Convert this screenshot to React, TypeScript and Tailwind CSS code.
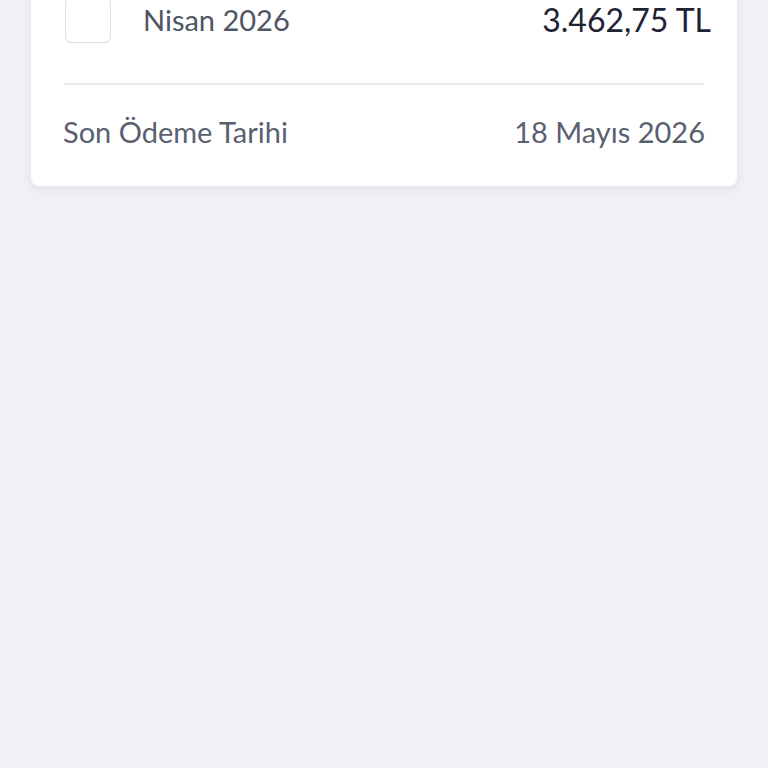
import React from 'react';

export default function App() {
  return (
    <div className="flex min-h-screen flex-col bg-[#eff1f5] px-[31px] font-['Lato',sans-serif]">
      {/* Invoice card (scrolled, top part off-screen) */}
      <div className="-mt-[40px] rounded-lg bg-white shadow-[0_2px_10px_rgba(30,40,70,0.09)]">
        <div className="flex items-center pl-[34px] pr-[26px] pt-[37px]">
          <div className="h-[46px] w-[46px] shrink-0 rounded-md border-[1.5px] border-[#dde0e7] bg-white" />
          <span className="ml-[32px] text-[29px] leading-[36px] text-[#4f5565]">Nisan 2026</span>
          <span className="ml-auto text-[32px] leading-[36px] text-[#1f2233]">3.462,75 TL</span>
        </div>
        <div className="mx-[33px] mt-[40px] h-[2px] bg-[#e8eaef]" />
        <div className="flex items-center justify-between px-[32px] pb-[36px] pt-[29px]">
          <span className="text-[29px] leading-[36px] text-[#5a6070]">Son Ödeme Tarihi</span>
          <span className="text-[29px] leading-[36px] text-[#5a6070]">18 Mayıs 2026</span>
        </div>
      </div>
    </div>
  );
}
